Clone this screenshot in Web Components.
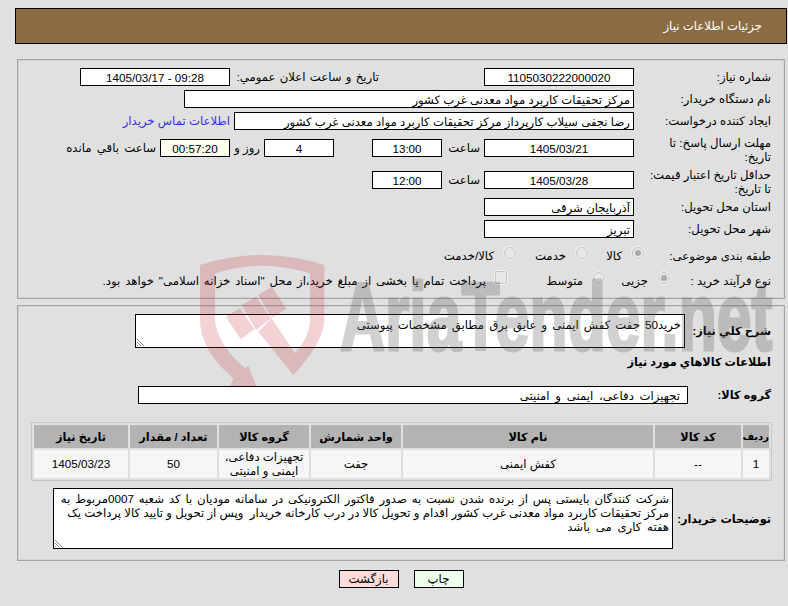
<!DOCTYPE html>
<html lang="fa">
<head>
<meta charset="utf-8">
<title>جزئیات اطلاعات نیاز</title>
<style>
  html, body { margin: 0; height: 100%; overflow: hidden; background: #e0e0e0; }
  body { font: 11.7px/14px "Liberation Sans", "DejaVu Sans", sans-serif; color: #000; }
  span.t { display: block; flex: none; text-align: right; white-space: nowrap; }
  a { color: #3333ee; text-decoration: none; }
</style>
</head>
<body>

<need-page>
  <need-header slot="header">جزئیات اطلاعات نیاز</need-header>

  <need-panel style="height:230px;padding-top:8px">
    <need-row label="شماره نیاز:">
      <need-box center style="width:150px">1105030222000020</need-box>
      <span class="t" style="width:143px;margin-right:105px;word-spacing:1px">تاریخ و ساعت اعلان عمومي:</span>
      <need-box center style="width:150px;margin-right:6px">09:28 - 1405/03/17</need-box>
    </need-row>
    <need-row label="نام دستگاه خریدار:" style="margin-top:4px">
      <need-box style="width:450px">مرکز تحقیقات کاربرد مواد معدنی غرب کشور</need-box>
    </need-row>
    <need-row label="ایجاد کننده درخواست:" style="margin-top:4px">
      <need-box style="width:400px">رضا نجفی سیلاب کارپرداز مرکز تحقیقات کاربرد مواد معدنی غرب کشور</need-box>
      <span class="t" style="margin-right:4px"><a href="#">اطلاعات تماس خریدار</a></span>
    </need-row>
    <need-row label="مهلت ارسال پاسخ: تا تاریخ:" top style="margin-top:9px;height:28px">
      <need-box center style="width:150px">1405/03/21</need-box>
      <span class="t" style="width:34px;margin-right:4px;padding-left:4px">ساعت</span>
      <need-box center style="width:70px">13:00</need-box>
      <need-box center style="width:70px;margin-right:38px">4</need-box>
      <span class="t" style="width:30px;padding-right:4px">روز و</span>
      <need-box center style="width:70px;--box-bg:#ffffee">00:57:20</need-box>
      <span class="t" style="margin-right:4px;word-spacing:2px">ساعت باقي مانده</span>
    </need-row>
    <need-row label="حداقل تاریخ اعتبار قیمت: تا تاریخ:" top style="margin-top:4px;height:23px">
      <need-box center style="width:150px">1405/03/28</need-box>
      <span class="t" style="width:34px;margin-right:4px;padding-left:4px">ساعت</span>
      <need-box center style="width:70px">12:00</need-box>
    </need-row>
    <need-row label="استان محل تحویل:" style="margin-top:4px">
      <need-box style="width:150px">آذربایجان شرقی</need-box>
    </need-row>
    <need-row label="شهر محل تحویل:" style="margin-top:4px">
      <need-box style="width:150px">تبریز</need-box>
    </need-row>
    <need-row label="طبقه بندی موضوعی:" style="margin-top:9px;--label:121px">
      <need-radio checked></need-radio>
      <span class="t" style="width:34px;padding-right:10px">کالا</span>
      <need-radio></need-radio>
      <span class="t" style="width:50px;padding-right:10px">خدمت</span>
      <need-radio></need-radio>
      <span class="t" style="padding-right:10px">کالا/خدمت</span>
    </need-row>
    <need-row label="نوع فرآیند خرید :" style="margin-top:7px;--label:95px">
      <need-radio checked></need-radio>
      <span class="t" style="width:43px;padding-right:10px">جزیی</span>
      <need-radio></need-radio>
      <span class="t" style="width:76px;padding-right:10px">متوسط</span>
      <need-radio square></need-radio>
      <span class="t" style="padding-right:9px;word-spacing:1.6px">پرداخت تمام یا بخشی از مبلغ خرید،از محل "اسناد خزانه اسلامی" خواهد بود.</span>
    </need-row>
  </need-panel>

  <need-panel style="height:246px;padding-top:8px;margin-top:6px">
    <need-row label="شرح کلي نیاز:" bold style="--label:80px">
      <need-box multi style="width:550px;height:34px;word-spacing:1.8px">خرید50 جفت کفش ایمنی و عایق برق مطابق مشخصات پیوستی</need-box>
    </need-row>
    <need-row label="اطلاعات کالاهاي مورد نیاز" bold style="margin-top:7px;--label:300px"></need-row>
    <need-row label="گروه کالا:" bold style="margin-top:17px;--label:77px">
      <need-box style="width:550px;--box-pad:7px;word-spacing:2.5px">تجهیزات دفاعی، ایمنی و امنیتی</need-box>
    </need-row>
    <need-items style="margin-top:18px;margin-right:-1px"></need-items>
    <need-row label="توضیحات خریدار:" bold style="margin-top:7px;--label:92px">
      <need-box multi style="width:620px;height:61px"><div style="word-spacing:1.6px">شرکت کنندگان بایستی پس از برنده شدن نسبت به صدور فاکتور الکترونیکی در سامانه مودیان با کد شعبه 0007مربوط به</div><div>مرکز تحقیقات کاربرد مواد معدنی غرب کشور اقدام و تحویل کالا در درب کارخانه خریدار &nbsp;وپس از تحویل و تایید کالا پرداخت یک</div><div style="word-spacing:2.5px">هفته کاری می باشد</div></need-box>
    </need-row>
  </need-panel>

  <need-actions>
    <need-button style="width:50px;--btn-bg:#eeffee">چاپ</need-button>
    <need-button style="width:60px;--btn-bg:#ffdcdc">بازگشت</need-button>
  </need-actions>

  <need-watermark></need-watermark>
</need-page>

<script>
function define(name, html, init) {
  customElements.define(name, class extends HTMLElement {
    constructor() {
      super();
      this.attachShadow({mode: 'open'}).innerHTML = html;
    }
    connectedCallback() {
      if (init) init(this, this.shadowRoot);
    }
  });
}

define('need-page', `
  <style>
    :host { display: block; position: relative; width: 788px; height: 606px; padding: 8px 1px 0 15px; box-sizing: border-box; direction: rtl; }
    .main { margin: 15px 2px 0; }
  </style>
  <slot name="header"></slot>
  <div class="main"><slot></slot></div>
`);

define('need-header', `
  <style>
    :host { display: flex; align-items: center; height: 36px; box-sizing: border-box; border: 1px solid #000; background: #8c6d43; color: #fff; padding: 0 24px 0 0; }
  </style>
  <slot></slot>
`);

define('need-panel', `
  <style>
    :host { display: block; box-sizing: content-box; border: 1px solid #a4a4a4; box-shadow: inset 0 0 0 1px #d4d4d4; padding: 0 12px 0 12px; }
    div { margin-right: 1px; }
  </style>
  <div><slot></slot></div>
`);

define('need-row', `
  <style>
    :host { display: flex; flex-direction: row; min-height: 14px; }
    .label { flex: none; width: var(--label, 131px); margin-left: 6px; text-align: right; }
    :host([bold]) .label { font-weight: bold; font-size: 11.3px; white-space: nowrap; align-self: center; }
    :host(:not([top])) { align-items: center; }
    :host([top]) .label { margin-top: -3px; }
    .body { display: flex; align-items: center; flex: none; }
    :host([top]) .body { height: 18px; }
  </style>
  <div class="label"></div>
  <div class="body"><slot></slot></div>
`, (el, root) => {
  root.querySelector('.label').textContent = el.getAttribute('label');
});

define('need-box', `
  <style>
    :host { display: block; flex: none; box-sizing: border-box; height: 18px; border: 1px solid #000; background: var(--box-bg, #fff); padding: 1px var(--box-pad, 3px) 0; text-align: right; white-space: nowrap; overflow: hidden; position: relative; line-height: 15px; }
    :host([center]) { text-align: center; }
    :host([multi]) { line-height: 14px; padding-top: 3px; }
    svg { display: none; position: absolute; left: 0; bottom: 0; }
    :host([multi]) svg { display: block; }
  </style>
  <slot></slot>
  <svg width="9" height="9" viewBox="0 0 9 9"><path d="M1 1l7 7M1 4l4 4M1 7l1 1" stroke="#8a8a8a" stroke-width="1" fill="none"/></svg>
`);

define('need-radio', `
  <style>
    :host { display: block; flex: none; width: 12px; height: 12px; margin-bottom: 5px; box-sizing: border-box; border: 1px solid #c6c6c6; border-radius: 50%; background: #e8e8e8; box-shadow: 0 0 0 1px #efefef; position: relative; }
    :host([square]) { border-radius: 2px; height: 13px; margin-bottom: 6px; }
    i { display: none; position: absolute; left: 2px; top: 2px; width: 6px; height: 6px; border-radius: 50%; background: #ababab; }
    :host([checked]) i { display: block; }
  </style>
  <i></i>
`);

define('need-items', `
  <style>
    :host { display: block; }
    table { table-layout: fixed; width: 741px; border: 1px solid #c8c8c8; border-spacing: 2px; border-collapse: separate; direction: rtl; }
    th, td { padding: 0; text-align: center; }
    th { height: 23px; background: #b3b3b3; font-weight: bold; font-size: 11.3px; }
    th.narrow { font-size: 10px; }
    td { height: 28px; background: #f6f6f6; }
  </style>
  <table>
    <colgroup><col style="width:26px"><col style="width:86px"><col style="width:250px"><col style="width:90px"><col style="width:90px"><col style="width:87px"><col style="width:94px"></colgroup>
    <tr><th class="narrow">ردیف</th><th>کد کالا</th><th>نام کالا</th><th>واحد شمارش</th><th>گروه کالا</th><th>تعداد / مقدار</th><th>تاریخ نیاز</th></tr>
    <tr><td>1</td><td>--</td><td>کفش ایمنی</td><td>جفت</td><td>تجهیزات دفاعی، ایمنی و امنیتی</td><td>50</td><td>1405/03/23</td></tr>
  </table>
`);

define('need-actions', `
  <style>
    :host { display: flex; justify-content: center; gap: 15px; margin-top: 9px; }
  </style>
  <slot></slot>
`);

define('need-button', `
  <style>
    :host { display: block; box-sizing: border-box; height: 18px; border: 1px solid #000; background: var(--btn-bg); text-align: center; line-height: 16px; }
  </style>
  <slot></slot>
`);

define('need-watermark', `
  <style>
    :host { position: absolute; left: 190px; top: 240px; width: 598px; height: 146px; overflow: hidden; pointer-events: none; direction: ltr; }
    svg { position: absolute; left: 0; top: 0; }
    .word { position: absolute; left: 150px; top: 31px; width: 660px; font: bold 96px/92px "Liberation Sans", sans-serif; color: #5a5a5a; -webkit-text-stroke: 3px #5a5a5a; opacity: .27; white-space: nowrap; transform: scaleX(.65); transform-origin: 0 0; }
  </style>
  <svg width="150" height="146" viewBox="0 0 450 438">
    <g fill="#bd1e2d" fill-opacity=".2">
      <path d="M30 75Q215 15 403 75L403 240Q400 310 310 405L205 275L245 235L315 340Q360 290 360 240L360 100Q215 55 75 100L75 240Q80 310 165 385L175 378L200 440L120 440L130 415Q30 330 30 240Z"/>
      <path d="M107 230L150 205L193 268L152 298Z"/>
      <path d="M155 195L198 170L243 235L198 270Z"/>
      <path d="M205 165L245 140L290 207L245 233Z"/>
    </g>
  </svg>
  <div class="word">AriaTender.net</div>
`);
</script>
</body>
</html>
